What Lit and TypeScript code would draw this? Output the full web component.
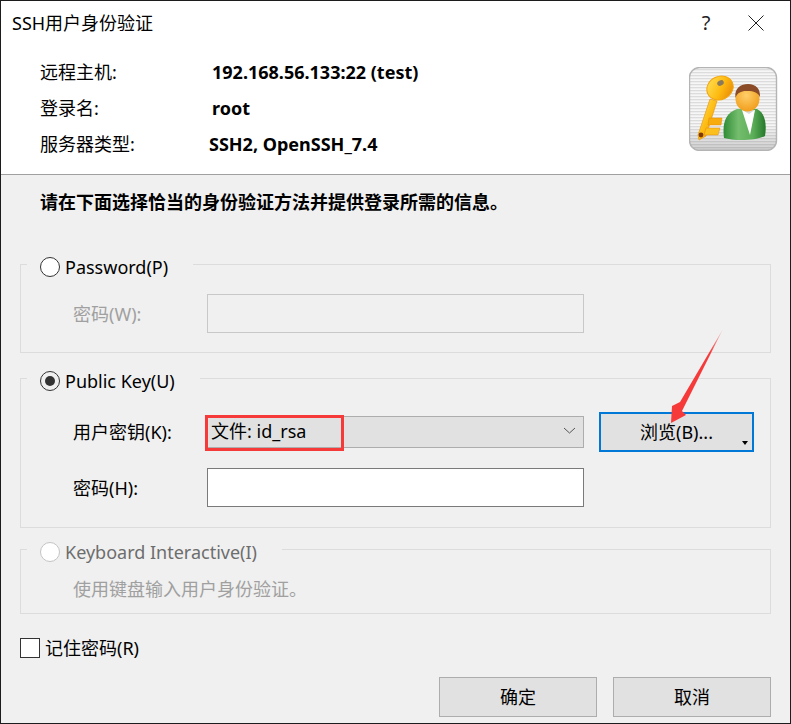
import { LitElement, html, css, svg } from 'lit';
import { customElement, state } from 'lit/decorators.js';

const keyIcon = svg`
  <defs>
    <pattern id="stripes" width="3" height="3" patternUnits="userSpaceOnUse">
      <rect width="3" height="3" fill="#f6f6f6" />
      <rect width="3" height="1.3" fill="#dcdcdc" />
    </pattern>
    <linearGradient id="shade" x1="0" y1="0" x2="0" y2="1">
      <stop offset="0.7" stop-color="#000" stop-opacity="0" />
      <stop offset="1" stop-color="#000" stop-opacity="0.16" />
    </linearGradient>
    <linearGradient id="gold" x1="0" y1="0" x2="1" y2="1">
      <stop offset="0" stop-color="#ffe45c" />
      <stop offset="0.55" stop-color="#fdb90f" />
      <stop offset="1" stop-color="#e27d05" />
    </linearGradient>
    <linearGradient id="shirt" x1="0" y1="0" x2="1" y2="0">
      <stop offset="0" stop-color="#2f8c35" />
      <stop offset="0.35" stop-color="#74bd6e" />
      <stop offset="0.7" stop-color="#5cae58" />
      <stop offset="1" stop-color="#23782a" />
    </linearGradient>
    <radialGradient id="face" cx="0.45" cy="0.35" r="0.7">
      <stop offset="0" stop-color="#ffcf6a" />
      <stop offset="1" stop-color="#f09a16" />
    </radialGradient>
  </defs>
  <rect x="10.5" y="7.5" width="87" height="83" rx="10" fill="url(#stripes)" stroke="#b4b4b4" stroke-width="1.4" />
  <rect x="11" y="8" width="86" height="82" rx="10" fill="url(#shade)" />
  <path d="M31 39 L38 41 L27 76 L20 80 L19 75 Z" fill="url(#gold)" stroke="#e8900a" stroke-width="0.6" />
  <path d="M30 58 H43 L42 65 H29 Z" fill="#f7ab0c" stroke="#e08a08" stroke-width="0.5" />
  <path d="M27 68 H41 L39 75 H25 Z" fill="#fbc01e" stroke="#e08a08" stroke-width="0.5" />
  <circle cx="22" cy="75" r="2.4" fill="#7c3a0a" />
  <ellipse cx="41" cy="28" rx="13.5" ry="11.5" transform="rotate(-25 41 28)" fill="url(#gold)" stroke="#f3a50e" stroke-width="1" />
  <ellipse cx="41.5" cy="23" rx="3.4" ry="2.6" transform="rotate(-25 41.5 23)" fill="#8a7a5c" />
  <path d="M45 78 C43 62 47 53 58 49 L78 49 C86 53 88 64 86 76 C76 81 55 81 45 78 Z" fill="url(#shirt)" />
  <path d="M63 50 L76 50 L71 75 Z" fill="#fff" />
  <path d="M63 50 L76 50 L70 54 Z" fill="#d8d8d8" />
  <ellipse cx="68.5" cy="39" rx="12" ry="12.5" fill="url(#face)" />
  <path d="M56.5 38 C55 28 62 24 69 24 C77 24 81.5 29 81 37 C78 31 72 31 67 31 C62 31 58 33 56.5 38 Z" fill="#8a4b26" />
`;

@customElement('app-root')
export class AppRoot extends LitElement {
  @state() private info = [
    { label: '远程主机:', value: '192.168.56.133:22 (test)', shift: false },
    { label: '登录名:', value: 'root', shift: false },
    { label: '服务器类型:', value: 'SSH2, OpenSSH_7.4', shift: true },
  ];

  static styles = css`
    :host {
      display: block;
      position: relative;
      width: 791px;
      height: 724px;
      font-family: 'Noto Sans', 'Noto Sans CJK SC', sans-serif;
      font-size: 18px;
      line-height: 24px;
      color: #000;
    }

    .window {
      box-sizing: border-box;
      height: 724px;
      border: 1px solid #1c1c1c;
      border-right-width: 1px;
      display: flex;
      flex-direction: column;
      background: #f0f0f0;
    }

    .top {
      height: 173px;
      background: #fff;
      border-bottom: 1px solid #a0a0a0;
    }

    .titlebar {
      height: 44px;
      display: flex;
      align-items: center;
      padding-left: 11px;
    }

    .title {
      flex: 1;
    }

    .help {
      width: 20px;
      text-align: center;
      font-size: 20px;
      color: #222;
      margin-right: 32px;
    }

    .close {
      display: block;
      margin-right: 26px;
    }

    .header {
      display: flex;
      justify-content: space-between;
      padding: 9px 12px 0 39px;
    }

    .info {
      display: grid;
      grid-template-columns: 172px auto;
      grid-auto-rows: 36px;
      align-items: center;
      justify-content: start;
    }

    .info .value {
      font-weight: 700;
    }

    .info .shift {
      margin-left: -3px;
    }

    .logo {
      display: block;
      margin-top: 13px;
    }

    .body {
      flex: 1;
      padding: 15px 19px 0;
      display: flex;
      flex-direction: column;
    }

    .intro {
      font-weight: 700;
      margin: 0 0 50px 20px;
    }

    .group {
      border: 1px solid #dcdcdc;
      margin-bottom: 25px;
    }

    .legend {
      width: fit-content;
      height: 20px;
      margin: -8px 0 0 6px;
      padding: 0 25px 0 13px;
      background: #f0f0f0;
      display: flex;
      align-items: center;
      gap: 5px;
      position: relative;
    }

    .radio {
      box-sizing: border-box;
      width: 20px;
      height: 20px;
      border: 1px solid #333;
      border-radius: 50%;
      background: #fff;
      display: flex;
      align-items: center;
      justify-content: center;
    }

    .radio.on {
      background: #f0f0f0;
    }

    .radio.on::after {
      content: '';
      width: 10px;
      height: 10px;
      border-radius: 50%;
      background: #333;
    }

    .radio.off {
      border-color: #c4c4c4;
    }

    .muted {
      color: #a0a0a0;
    }

    .legend .dim {
      color: #6d6d6d;
    }

    .fields {
      display: grid;
      grid-template-columns: 134px 377px 155px;
      column-gap: 0;
      row-gap: 16px;
      align-items: center;
      padding-left: 52px;
    }

    .pw {
      padding-top: 17px;
      padding-bottom: 19px;
    }

    .pk {
      padding-top: 20px;
      padding-bottom: 20px;
    }

    .input {
      box-sizing: border-box;
      height: 39px;
      border: 1px solid #7a7a7a;
      background: #fff;
    }

    .input.disabled {
      border-color: #c8c8c8;
      background: #f0f0f0;
    }

    .combo {
      box-sizing: border-box;
      height: 32px;
      border: 1px solid #adadad;
      background: #e1e1e1;
      display: flex;
      align-items: center;
      justify-content: space-between;
      padding: 0 7px 2px 3px;
      position: relative;
    }

    .mark {
      position: absolute;
      left: -3px;
      top: -2px;
      width: 139px;
      height: 36px;
      box-sizing: border-box;
      border: 3px solid #f63a3a;
    }

    .browse {
      box-sizing: border-box;
      width: 155px;
      height: 40px;
      margin-left: 15px;
      align-self: start;
      margin-top: 1px;
      border: 2px solid #0078d7;
      background: #e1e1e1;
      display: flex;
      align-items: center;
      justify-content: center;
      position: relative;
    }

    .browse svg {
      position: absolute;
      right: 4px;
      bottom: 5px;
    }

    .kbd {
      padding: 15px 0 12px 52px;
    }

    .remember {
      display: flex;
      align-items: center;
      gap: 5px;
      margin-top: -3px;
    }

    .check {
      box-sizing: border-box;
      width: 20px;
      height: 20px;
      border: 1px solid #333;
      background: #fff;
    }

    .actions {
      display: flex;
      justify-content: flex-end;
      gap: 16px;
      margin-top: 17px;
    }

    .btn {
      box-sizing: border-box;
      width: 158px;
      height: 40px;
      border: 1px solid #adadad;
      background: #e1e1e1;
      display: flex;
      align-items: center;
      justify-content: center;
    }

    .annotation {
      position: absolute;
      inset: 0;
      pointer-events: none;
    }
  `;

  render() {
    return html`
      <div class="window">
        <div class="top">
          <div class="titlebar">
            <span class="title">SSH用户身份验证</span>
            <span class="help">?</span>
            <svg class="close" width="16" height="16" viewBox="0 0 16 16">
              <path d="M.5 .5 15.5 15.5M15.5 .5 .5 15.5" stroke="#222" stroke-width="1" fill="none" />
            </svg>
          </div>
          <div class="header">
            <div class="info">
              ${this.info.map(
                (row) => html`
                  <span>${row.label}</span>
                  <span class="value ${row.shift ? 'shift' : ''}">${row.value}</span>
                `
              )}
            </div>
            <svg class="logo" width="89" height="84" viewBox="10 7 89 84">${keyIcon}</svg>
          </div>
        </div>

        <div class="body">
          <p class="intro">请在下面选择恰当的身份验证方法并提供登录所需的信息。</p>

          <div class="group">
            <div class="legend"><span class="radio"></span><span>Password(P)</span></div>
            <div class="fields pw">
              <span class="muted">密码(W):</span>
              <div class="input disabled"></div>
            </div>
          </div>

          <div class="group" style="margin-bottom: 21px">
            <div class="legend"><span class="radio on"></span><span>Public Key(U)</span></div>
            <div class="fields pk">
              <span>用户密钥(K):</span>
              <div class="combo">
                <span>文件: id_rsa</span>
                <svg width="13" height="7" viewBox="0 0 13 7">
                  <path d="M1 1 6.5 6 12 1" stroke="#555" stroke-width="1" fill="none" />
                </svg>
                <div class="mark"></div>
              </div>
              <div class="browse">
                <span>浏览(B)...</span>
                <svg width="6" height="4" viewBox="0 0 6 4"><path d="M0 0H6L3 4Z" fill="#000" /></svg>
              </div>
              <span>密码(H):</span>
              <div class="input"></div>
            </div>
          </div>

          <div class="group">
            <div class="legend">
              <span class="radio off"></span><span class="dim">Keyboard Interactive(I)</span>
            </div>
            <div class="kbd muted">使用键盘输入用户身份验证。</div>
          </div>

          <div class="remember"><span class="check"></span><span>记住密码(R)</span></div>

          <div class="actions">
            <div class="btn">确定</div>
            <div class="btn">取消</div>
          </div>
        </div>
      </div>

      <svg class="annotation" width="791" height="724" viewBox="0 0 791 724">
        <defs>
          <linearGradient id="arrow" x1="723" y1="329" x2="671" y2="423" gradientUnits="userSpaceOnUse">
            <stop offset="0" stop-color="#f63a3a" stop-opacity="0.2" />
            <stop offset="0.25" stop-color="#f63a3a" />
          </linearGradient>
        </defs>
        <path d="M723 329 680 402 672 406 671 423 686 415 682 411Z" fill="url(#arrow)" />
      </svg>
    `;
  }
}
